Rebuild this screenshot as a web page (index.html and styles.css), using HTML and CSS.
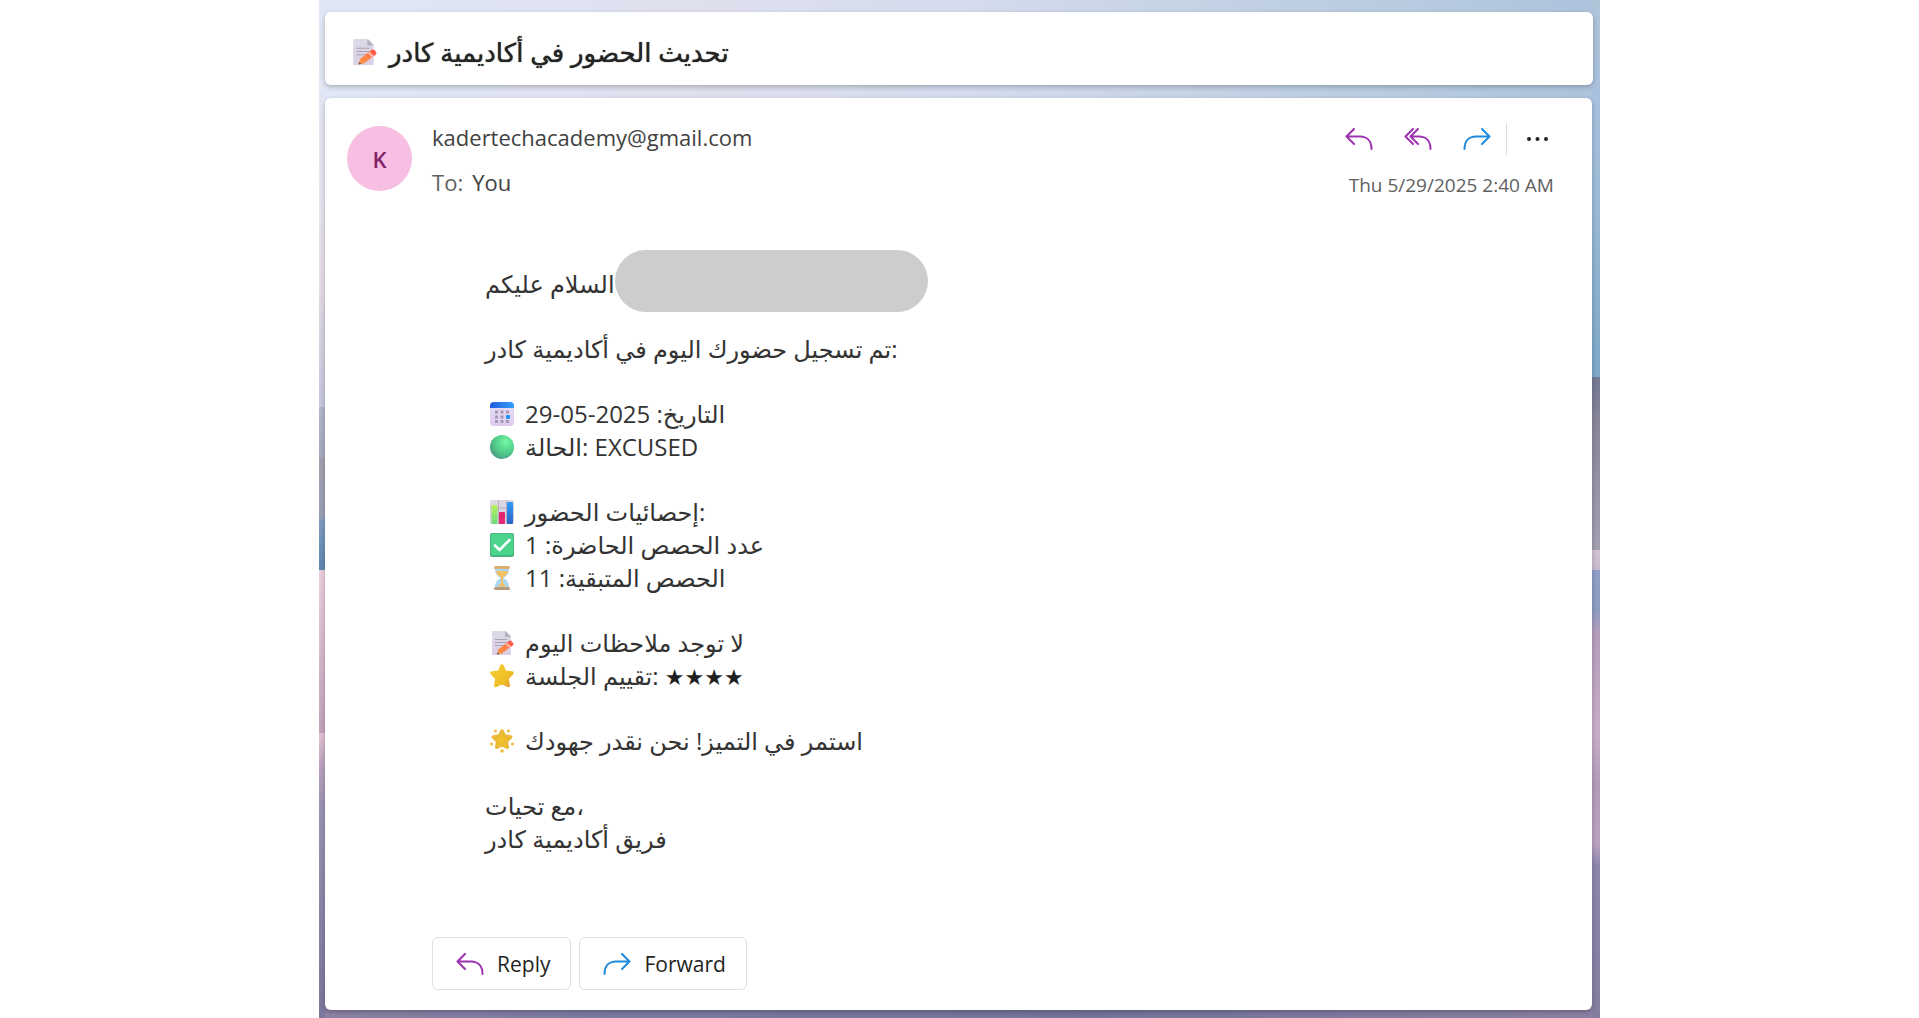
FILE: index.html
```html
<!DOCTYPE html>
<html lang="en">
<head>
  <meta charset="utf-8">
  <meta name="viewport" content="width=device-width, initial-scale=1">
  <title>تحديث الحضور في أكاديمية كادر</title>
  <link rel="stylesheet" href="styles.css">
</head>
<body>
  <svg class="defs" aria-hidden="true">
    <defs>
      <linearGradient id="paper" x1="0" y1="0" x2="0" y2="1"><stop offset="0" stop-color="#dcdae6"/><stop offset="1" stop-color="#dccfe6"/></linearGradient>
      <linearGradient id="pencil" x1="1" y1="0" x2="0" y2="1"><stop offset="0" stop-color="#ff6a48"/><stop offset="1" stop-color="#ff9a45"/></linearGradient>
      <linearGradient id="cal-top" x1="0" y1="0" x2="1" y2="0"><stop offset="0" stop-color="#2458dd"/><stop offset="1" stop-color="#2fa2ff"/></linearGradient>
      <linearGradient id="cal-page" x1="0" y1="0" x2="0" y2="1"><stop offset="0" stop-color="#e6e1f2"/><stop offset="1" stop-color="#dfc9f2"/></linearGradient>
      <radialGradient id="ball" cx="0.65" cy="0.3" r="0.75"><stop offset="0" stop-color="#70f8a4"/><stop offset="0.6" stop-color="#50cb88"/><stop offset="1" stop-color="#4a9d87"/></radialGradient>
      <linearGradient id="bar-green" x1="0" y1="0" x2="0" y2="1"><stop offset="0" stop-color="#b5f05c"/><stop offset="1" stop-color="#6fdc7c"/></linearGradient>
      <linearGradient id="bar-blue" x1="0" y1="0" x2="0" y2="1"><stop offset="0" stop-color="#2f9dfa"/><stop offset="1" stop-color="#2a62c0"/></linearGradient>
      <linearGradient id="gold" x1="0" y1="0" x2="1" y2="1"><stop offset="0" stop-color="#f6cf36"/><stop offset="0.7" stop-color="#efbd24"/><stop offset="1" stop-color="#e09a35"/></linearGradient>
      <symbol id="memo" viewBox="0 0 24 24">
        <path d="M3 0h13l5 5v19H3a1 1 0 0 1-1-1V1a1 1 0 0 1 1-1z" fill="url(#paper)"/>
        <path d="M15 0l6 6h-5a1 1 0 0 1-1-1z" fill="#b5b0c0"/>
        <path d="M5 8.500h12M5 11.500h12M5 14.500h9" stroke="#aaa4b4" stroke-width="1" fill="none"/>
        <path d="M7 23.500l1.200-5L18 10.800l4 4L12 22.500z" fill="url(#pencil)"/>
        <path d="M17 11.600l2-1.600q1.500-1 2.800.4l1.300 1.500q1 1.300-.2 2.400l-1.700 1.500z" fill="#ff5c48"/>
        <path d="M15.300 12.900l1.700-1.300 4.200 4.200-1.700 1.300z" fill="#ffb4a0"/>
        <path d="M7 23.500l.6-2.300 1.800 1.700z" fill="#6b4a5c"/>
      </symbol>
      <symbol id="calendar" viewBox="0 0 24 24">
        <rect x="0" y="0" width="24" height="24" rx="4" fill="url(#cal-page)"/>
        <path d="M4 0h16a4 4 0 0 1 4 4v2H0V4a4 4 0 0 1 4-4z" fill="url(#cal-top)"/>
        <path d="M5 8.500h3v3H5zM10.500 8.500h3v3h-3zM16 8.500h3v3h-3zM5 13.500h3v3H5zM10.500 13.500h3v3h-3zM5 18h3v3H5zM10.500 18h3v3h-3zM16 18h3v3h-3z" fill="#a299b3"/>
        <rect x="16" y="13" width="4" height="4" rx="1" fill="#1c96f5"/>
      </symbol>
      <symbol id="green-ball" viewBox="0 0 24 24"><circle cx="12" cy="12" r="12" fill="url(#ball)"/></symbol>
      <symbol id="chart" viewBox="0 0 24 24">
        <rect width="24" height="24" rx="2" fill="#dcd6e4"/>
        <path d="M8.500 0v24M16.500 0v24M0 8h24M0 16h24" stroke="#b8b0c2" stroke-width="1"/>
        <rect x="1.500" y="5" width="6" height="19" rx="1" fill="url(#bar-green)"/>
        <rect x="9" y="12" width="6" height="12" rx="1" fill="#e3286f"/>
        <rect x="17" y="2" width="6" height="22" rx="1" fill="url(#bar-blue)"/>
      </symbol>
      <symbol id="check" viewBox="0 0 24 24">
        <rect width="24" height="24" rx="2" fill="#45b77d"/>
        <rect x="1" y="1" width="22" height="21" rx="2" fill="#4dd48c"/>
        <path d="M5 12.500l4.500 4.500L19.500 7" fill="none" stroke="#fff" stroke-width="2.500" stroke-linecap="round" stroke-linejoin="round"/>
      </symbol>
      <symbol id="hourglass" viewBox="0 0 24 24">
        <path d="M5 2h14c0 5-1 7-5.500 10C18 15 19 17 19 22H5c0-5 1-7 5.500-10C6 9 5 7 5 2z" fill="#a9d8f2"/>
        <path d="M6 5h12c-.5 3-2 4.500-5 6.500V17l3.500 3.500h-9L11 17v-5.500C8 9.500 6.500 8 6 5z" fill="#f4c066"/>
        <rect x="4" y="0" width="16" height="3" rx="1.500" fill="#dcae70"/>
        <rect x="4" y="21" width="16" height="3" rx="1.500" fill="#b89a7c"/>
      </symbol>
      <symbol id="star" viewBox="0 0 24 24">
        <path d="M12 2l2.800 6.200 7.200.9-5 5.200 1.200 7.200L12 18.300 5.800 21.500 7 14.300 2 9.100l7.200-.9z" fill="url(#gold)" stroke="url(#gold)" stroke-width="3.500" stroke-linejoin="round"/>
      </symbol>
      <symbol id="glow-star" viewBox="0 0 24 24">
        <path d="M12 2l2.600 5 6 .9-4.300 4.300 1 6L12 15.600 6.700 18.200l1-6L3.400 7.900l6-.9z" fill="url(#gold)" stroke="#ecb934" stroke-width="3.500" stroke-linejoin="round"/>
        <g fill="#f3bb3c"><circle cx="5.500" cy="2" r="1.500"/><circle cx="18.500" cy="2" r="1.500"/><circle cx="1.500" cy="15" r="1.500"/><circle cx="22.500" cy="15" r="1.500"/><circle cx="12" cy="22" r="1.800"/></g>
      </symbol>
      <symbol id="reply" viewBox="0 0 28 22"><path d="M9 1L1.500 8.500 9 16M1.500 8.500H15c7 0 11.500 4.500 11.500 12.500"/></symbol>
      <symbol id="reply-all" viewBox="0 0 28 22"><path d="M9 1L1.500 8.500 9 16M14 1L6.500 8.500 14 16M6.500 8.500H15c7 0 11.500 4.500 11.500 12.500"/></symbol>
      <symbol id="forward" viewBox="0 0 28 22"><path d="M19 1l7.500 7.500L19 16M26.500 8.500H13C6 8.500 1.500 13 1.500 21"/></symbol>
    </defs>
  </svg>

  <main class="pane">
    <header class="subject card">
      <svg class="emoji emoji-large" aria-hidden="true"><use href="#memo"/></svg>
      <h1>تحديث الحضور في أكاديمية كادر</h1>
    </header>

    <article class="message card">
      <header class="message-head">
        <div class="avatar" aria-hidden="true">K</div>
        <div class="people">
          <p class="sender">kadertechacademy@gmail.com</p>
          <p class="recipient"><span class="label">To:</span><span>You</span></p>
        </div>
        <div class="meta">
          <div class="actions">
            <button type="button" class="icon-button reply" aria-label="Reply"><svg><use href="#reply"/></svg></button>
            <button type="button" class="icon-button reply" aria-label="Reply all"><svg><use href="#reply-all"/></svg></button>
            <button type="button" class="icon-button forward" aria-label="Forward"><svg><use href="#forward"/></svg></button>
            <span class="divider"></span>
            <button type="button" class="icon-button more" aria-label="More actions"><svg viewBox="0 0 32 22"><circle cx="7" cy="11" r="2"/><circle cx="15.500" cy="11" r="2"/><circle cx="24" cy="11" r="2"/></svg></button>
          </div>
          <time datetime="2025-05-29T02:40">Thu 5/29/2025 2:40 AM</time>
        </div>
      </header>

      <div class="content">
        <div class="block"><p class="line greeting">السلام عليكم<span class="redacted"></span></p></div>
        <div class="block"><p class="line">تم تسجيل حضورك اليوم في أكاديمية كادر:</p></div>
        <div class="block">
          <p class="line"><svg class="emoji" aria-hidden="true"><use href="#calendar"/></svg><span>التاريخ: 2025-05-29</span></p>
          <p class="line"><svg class="emoji" aria-hidden="true"><use href="#green-ball"/></svg><span>الحالة: EXCUSED</span></p>
        </div>
        <div class="block">
          <p class="line"><svg class="emoji" aria-hidden="true"><use href="#chart"/></svg><span>إحصائيات الحضور:</span></p>
          <p class="line"><svg class="emoji" aria-hidden="true"><use href="#check"/></svg><span>عدد الحصص الحاضرة: 1</span></p>
          <p class="line"><svg class="emoji" aria-hidden="true"><use href="#hourglass"/></svg><span>الحصص المتبقية: 11</span></p>
        </div>
        <div class="block">
          <p class="line"><svg class="emoji" aria-hidden="true"><use href="#memo"/></svg><span>لا توجد ملاحظات اليوم</span></p>
          <p class="line"><svg class="emoji" aria-hidden="true"><use href="#star"/></svg><span>تقييم الجلسة: <span class="rating">★★★★</span></span></p>
        </div>
        <div class="block"><p class="line"><svg class="emoji" aria-hidden="true"><use href="#glow-star"/></svg><span>استمر في التميز! نحن نقدر جهودك</span></p></div>
        <div class="block">
          <p class="line">مع تحيات،</p>
          <p class="line">فريق أكاديمية كادر</p>
        </div>
      </div>

      <footer class="respond">
        <button type="button" class="respond-button reply"><svg aria-hidden="true"><use href="#reply"/></svg>Reply</button>
        <button type="button" class="respond-button forward"><svg aria-hidden="true"><use href="#forward"/></svg>Forward</button>
      </footer>
    </article>
  </main>
</body>
</html>
```

FILE: styles.css
```css
* { box-sizing: border-box; }

body {
  margin: 0;
  background: #fff;
  color: #333;
  font-family: "Open Sans", "DejaVu Sans", sans-serif;
  font-size: 24px;
}

h1, p { margin: 0; }

.defs { position: absolute; width: 0; height: 0; }

/* Reading pane over a dusk landscape */
.pane {
  width: 66.75%;
  min-height: 100vh;
  margin: 0 auto;
  padding: 12px 7px 8px 6px;
  display: flex;
  flex-direction: column;
  gap: 13px;
  background:
    linear-gradient(#e0e7f6 0%, #e6e4f0 19%, #e4dbe6 28%, #c5c6dc 40%, #b3b5cc 40%, #a5a9c0 45%, #a3a0ae 45%, #98a0b5 51%, #7f9cc0 51%, #5f86b0 56%, #eccfdd 56%, #c0a3bb 72%, #e3c3d3 72%, #bda4bf 75%, #9c93b3 79%, #7b769c 100%) left / 6px 100% no-repeat,
    linear-gradient(#b0c4d8 0%, #a9c1de 9%, #9dbbd6 19%, #7ba7c8 37%, #737994 37%, #8b8799 42%, #a2a0b0 54%, #d4c1d3 54%, #c9bad0 56%, #8e9fc6 56%, #8f9cc2 60%, #b29dba 62%, #c8aec6 72%, #b09cba 77%, #b9a3c0 83%, #8d87ae 85%, #847d9f 100%) right / 8px 100% no-repeat,
    linear-gradient(90deg, #8c82a5, #7d7ba3 20%, #74749c 60%, #8c81a4) bottom / 100% 10px no-repeat,
    linear-gradient(90deg, #e0e7f6, #dfe0ee 30%, #d3dbed 52%, #bfd0e2 75%, #adc3dc) top / 100% 50% no-repeat,
    #8582a5;
}

.card {
  background: #fff;
  border-radius: 6px;
  box-shadow: 0 2px 5px rgba(0, 0, 0, 0.24);
}

.subject {
  display: flex;
  align-items: center;
  gap: 12px;
  min-height: 73px;
  padding: 14px 28px 8px 26px;
}

.subject h1 {
  color: #242424;
  font-size: 26px;
  font-weight: 500;
  line-height: 36px;
  text-shadow: 0 0 1px #242424;
}

.message {
  flex: 1;
  display: flex;
  flex-direction: column;
  margin-right: 1px;
  padding: 22px 38px 20px 22px;
}

.message-head { display: flex; }

.avatar {
  display: flex;
  align-items: center;
  justify-content: center;
  width: 65px;
  height: 65px;
  margin: 6px 20px 0 0;
  border-radius: 50%;
  background: #f7bfe1;
  color: #83246a;
  font-size: 22px;
  font-weight: 600;
}

.people {
  flex: 1;
  font-size: 22px;
  line-height: 30px;
  color: #424242;
}

.sender { margin: 2px 0 15px; }

.recipient { display: flex; gap: 9px; }
.label { color: #616161; }

.meta {
  display: flex;
  flex-direction: column;
  align-items: flex-end;
  gap: 17px;
  padding-top: 3px;
  color: #616161;
  font-size: 19px;
  line-height: 26px;
}

.actions { display: flex; align-items: center; gap: 15px; height: 32px; }

button {
  border: 0;
  background: none;
  color: #242424;
  font: inherit;
  cursor: pointer;
}

svg { display: block; flex: none; overflow: visible; }

.icon-button { padding: 0; }
.icon-button.reply { margin-right: 16px; }
.icon-button svg, .respond-button svg { width: 28px; height: 22px; }
.icon-button.more svg { width: 32px; fill: #242424; }

.reply svg, .forward svg {
  fill: none;
  stroke-width: 2;
  stroke-linecap: round;
  stroke-linejoin: round;
}
.reply svg { stroke: #9c33b0; }
.forward svg { stroke: #1f8be0; }

.divider { width: 1px; height: 32px; background: #dcdcdc; }

.content {
  display: flex;
  flex-direction: column;
  gap: 32px;
  margin: 69px 0 70px 138px;
  line-height: 33px;
}

.line { display: flex; align-items: center; gap: 11px; height: 33px; }

.emoji { width: 24px; height: 24px; margin-left: 5px; }
.emoji-large { width: 26px; height: 26px; margin: 0; }

.greeting { gap: 0; }

.redacted {
  width: 313px;
  height: 62px;
  margin: -18px 0 -12px;
  border-radius: 31px;
  background: #cdcdcd;
}

.rating { font-size: 22px; color: #1f1f1f; }

.respond { display: flex; gap: 8px; margin: auto 0 0 85px; }

.respond-button {
  display: flex;
  align-items: center;
  gap: 13px;
  height: 53px;
  padding: 0 20px 0 23px;
  border: 1px solid #e0e0e0;
  border-radius: 6px;
  font-size: 21px;
}
```
